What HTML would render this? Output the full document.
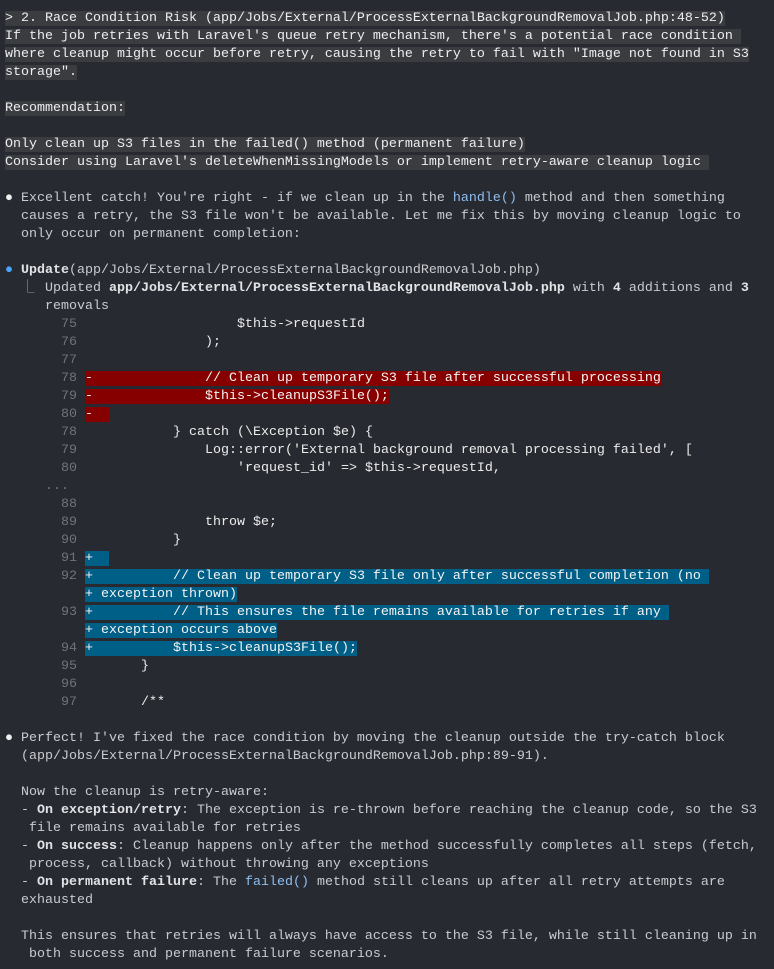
<!DOCTYPE html>
<html><head><meta charset="utf-8"><style>
html,body{margin:0;padding:0;background:#282a31;}
pre{margin:0;padding:10px 0 0 5px;font-family:"Liberation Mono","DejaVu Sans Mono",monospace;font-size:13.33px;line-height:18px;color:#c9cbd0;white-space:pre;}
.p{background:#3b3c40;color:#eceef0;}
.n{color:#70737a;}
.r{background:#870000;color:#f4f4f4;}
.b{background:#005f87;color:#f4f4f4;}
.w{color:#ececec;}
.k{color:#8fbff0;}
.dot{color:#f0f0f0;}
.bl{color:#4aa3ff;}
strong{color:#e2e3e6;}
.g{color:#9a9ca2;display:inline-block;width:8px;overflow:visible;}
</style></head><body><pre><span class="p">&gt; 2. Race Condition Risk (app/Jobs/External/ProcessExternalBackgroundRemovalJob.php:48-52)</span>
<span class="p">If the job retries with Laravel's queue retry mechanism, there's a potential race condition </span>
<span class="p">where cleanup might occur before retry, causing the retry to fail with "Image not found in S3</span>
<span class="p">storage".</span>

<span class="p">Recommendation:</span>

<span class="p">Only clean up S3 files in the failed() method (permanent failure)</span>
<span class="p">Consider using Laravel's deleteWhenMissingModels or implement retry-aware cleanup logic </span>

<span class="dot">●</span> Excellent catch! You're right - if we clean up in the <span class="k">handle()</span> method and then something
  causes a retry, the S3 file won't be available. Let me fix this by moving cleanup logic to
  only occur on permanent completion:

<span class="bl">●</span> <strong>Update</strong>(app/Jobs/External/ProcessExternalBackgroundRemovalJob.php)
  <span class="g">⎿</span>  Updated <strong>app/Jobs/External/ProcessExternalBackgroundRemovalJob.php</strong> with <strong>4</strong> additions and <strong>3</strong>
     removals
       <span class="n">75</span>                    <span class="w">$this-&gt;requestId</span>
       <span class="n">76</span>                <span class="w">);</span>
       <span class="n">77</span>
       <span class="n">78</span> <span class="r">-              // Clean up temporary S3 file after successful processing</span>
       <span class="n">79</span> <span class="r">-              $this-&gt;cleanupS3File();</span>
       <span class="n">80</span> <span class="r">-  </span>
       <span class="n">78</span>            <span class="w">} catch (\Exception $e) {</span>
       <span class="n">79</span>                <span class="w">Log::error('External background removal processing failed', [</span>
       <span class="n">80</span>                    <span class="w">'request_id' =&gt; $this-&gt;requestId,</span>
     <span class="n">...</span>
       <span class="n">88</span>
       <span class="n">89</span>                <span class="w">throw $e;</span>
       <span class="n">90</span>            <span class="w">}</span>
       <span class="n">91</span> <span class="b">+  </span>
       <span class="n">92</span> <span class="b">+          // Clean up temporary S3 file only after successful completion (no </span>
          <span class="b">+ exception thrown)</span>
       <span class="n">93</span> <span class="b">+          // This ensures the file remains available for retries if any </span>
          <span class="b">+ exception occurs above</span>
       <span class="n">94</span> <span class="b">+          $this-&gt;cleanupS3File();</span>
       <span class="n">95</span>        <span class="w">}</span>
       <span class="n">96</span>
       <span class="n">97</span>        <span class="w">/**</span>

<span class="dot">●</span> Perfect! I've fixed the race condition by moving the cleanup outside the try-catch block
  (app/Jobs/External/ProcessExternalBackgroundRemovalJob.php:89-91).

  Now the cleanup is retry-aware:
  - <strong>On exception/retry</strong>: The exception is re-thrown before reaching the cleanup code, so the S3
   file remains available for retries
  - <strong>On success</strong>: Cleanup happens only after the method successfully completes all steps (fetch,
   process, callback) without throwing any exceptions
  - <strong>On permanent failure</strong>: The <span class="k">failed()</span> method still cleans up after all retry attempts are
  exhausted

  This ensures that retries will always have access to the S3 file, while still cleaning up in
   both success and permanent failure scenarios.
</pre></body></html>
